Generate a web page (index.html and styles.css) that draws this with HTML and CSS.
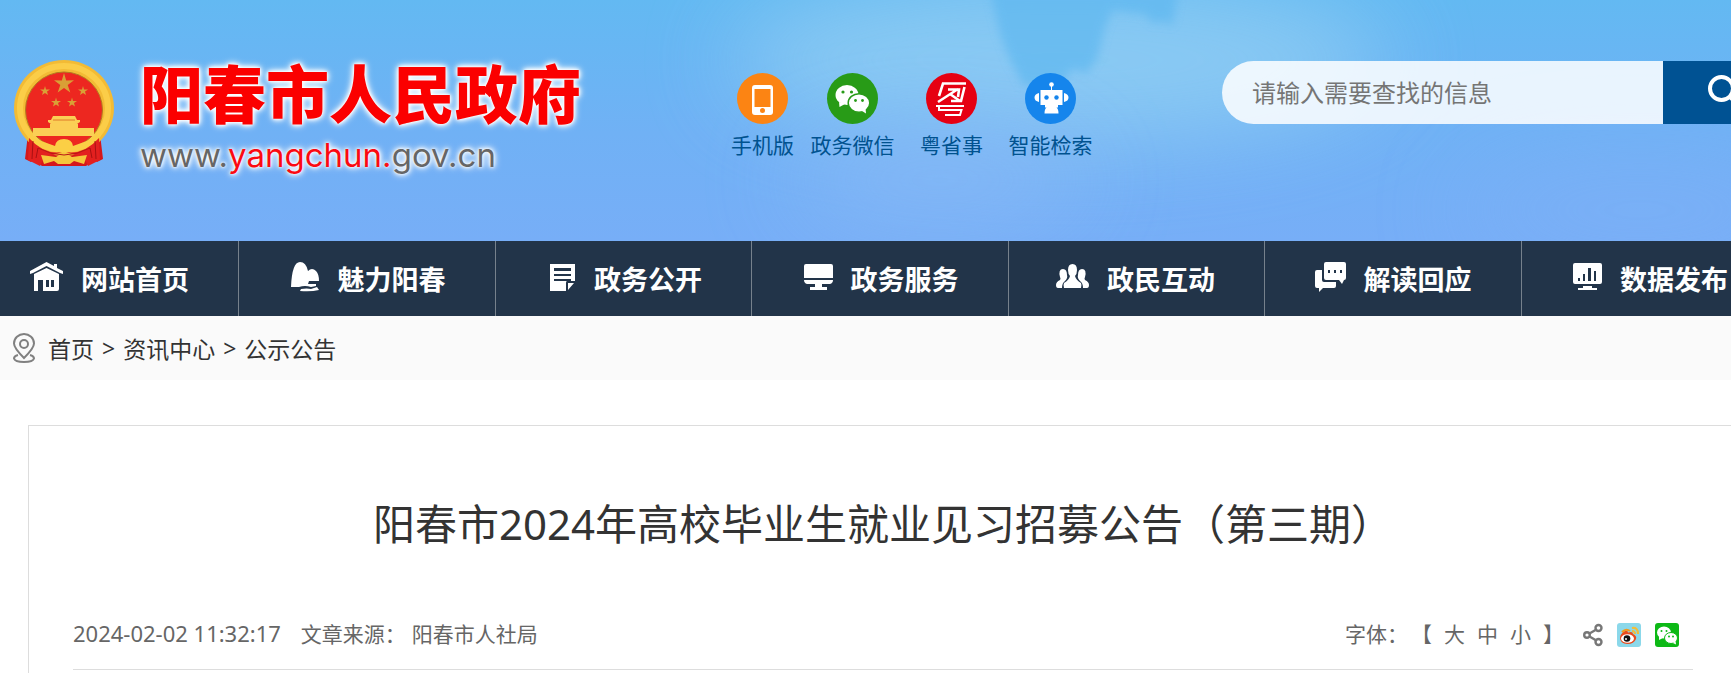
FILE: index.html
```html
<!DOCTYPE html>
<html lang="zh-CN">
<head>
    <meta charset="UTF-8">
    <meta name="viewport" content="width=device-width, initial-scale=1.0">
    <title>阳春市2024年高校毕业生就业见习招募公告（第三期）</title>
    <link rel="stylesheet" href="styles.css">
</head>
<body>
<div class="page">
    <header class="header">
        <svg class="sky" viewBox="0 0 1778 241" preserveAspectRatio="none" aria-hidden="true">
            <defs>
                <filter id="soft" x="-50%" y="-50%" width="200%" height="200%"><feGaussianBlur stdDeviation="5"/></filter>
                <filter id="haze" x="-50%" y="-100%" width="200%" height="300%"><feGaussianBlur stdDeviation="45"/></filter>
            </defs>
            <ellipse cx="1060" cy="60" rx="330" ry="80" fill="#93cff3" opacity=".8" filter="url(#haze)"/>
            <ellipse cx="940" cy="180" rx="150" ry="50" fill="#86b8f6" opacity=".8" filter="url(#haze)"/>
            <ellipse cx="1640" cy="210" rx="180" ry="50" fill="#7eb0f6" opacity=".6" filter="url(#haze)"/>
            <path d="M990-10H1178L1174 16L1171 26L1162 20L1154 24L1145 14L1112 10L1104 30L1098 56L1086 74L1074 68L1060 84L1024 86L1010 60L1000 34Z" fill="#5fb8f0" opacity=".7" filter="url(#soft)"/>
        </svg>
        <a class="logo" href="#">
            <svg class="emblem" viewBox="0 0 100 107" aria-label="国徽">
                <path d="M14 74L11 99L17 102L20 100L28 106H72L80 100L83 102L89 99L86 74Z" fill="#d5171b"/>
                <ellipse cx="50" cy="48" rx="50" ry="48" fill="#f3bb35"/>
                <ellipse cx="50" cy="48" rx="44" ry="42" fill="none" stroke="#fbcd48" stroke-width="6"/>
                <ellipse cx="50" cy="50" rx="38.500" ry="38" fill="#ed2720" stroke="#b27a20"/>
                <g fill="#d9a036">
                    <path d="M50 13L52.200 20.500L60 20.300L53.700 25L56.300 32.500L50 28L43.700 32.500L46.300 25L40 20.300L47.800 20.500Z"/>
                    <path d="M31 26L32 29.500L36 29.500L33 31.500L34 35L31 33L28 35L29 31.500L26 29.500L30 29.500Z"/>
                    <path d="M69 26L70 29.500L74 29.500L71 31.500L72 35L69 33L66 35L67 31.500L64 29.500L68 29.500Z"/>
                    <path d="M42 37.500L43 41L47 41L44 43L45 46.500L42 44.500L39 46.500L40 43L37 41L41 41Z"/>
                    <path d="M58 37.500L59 41L63 41L60 43L61 46.500L58 44.500L55 46.500L56 43L53 41L57 41Z"/>
                </g>
                <path d="M39 56H61L63 60H66V62L63 64H37L34 62V60H37ZM36 64H64V68H80V76H19V68H36Z" fill="#fbcf55"/>
                <path d="M39 60H61" stroke="#e07a2a"/>
                <path d="M13 76Q30 82 41 86Q42 79 50 79Q58 79 59 86Q70 82 87 76L78 86Q64 92 50 92Q36 92 22 86Z" fill="#fbcf45"/>
                <path d="M15 78Q30 95 48 92L30 98L26 106L14 100Z" fill="#e3201f"/>
                <path d="M85 78Q70 95 52 92L70 98L74 106L86 100Z" fill="#e3201f"/>
                <path d="M27 95L42 97L50 92L58 97L73 95L70 104L60 101L56 104H44L40 101L30 104Z" fill="#f6c63c"/>
                <path d="M24 88Q50 102 76 88" fill="none" stroke="#b81716" stroke-width="1"/>
                <path d="M19 81L18 99M24 88L22 98M81 81L82 99M76 88L78 98" stroke="#a81112" fill="none"/>
            </svg>
            <span class="logo-words">
                <strong class="logo-name">阳春市人民政府</strong>
                <span class="logo-url">www.<em>yangchun.</em>gov.cn</span>
            </span>
        </a>
        <nav class="quick">
            <a href="#">
                <svg viewBox="0 0 51 51"><circle cx="25.500" cy="25.500" r="25.500" fill="#fc8413"/><path fill="#fff" fill-rule="evenodd" d="M18 12H33Q36 12 36 15V39Q36 42 33 42H18Q15 42 15 39V15Q15 12 18 12ZM17.500 16V34H33.500V16ZM25.500 35A2.500 2.500 0 1 0 25.500 40A2.500 2.500 0 1 0 25.500 35Z"/></svg>
                手机版
            </a>
            <a href="#">
                <svg viewBox="0 0 51 51"><circle cx="25.500" cy="25.500" r="25.500" fill="#289b17"/><ellipse cx="20" cy="22" rx="11.500" ry="10" fill="#fff"/><path d="M12 29L12.500 34L18 31Z" fill="#fff"/><ellipse cx="32" cy="30" rx="10.800" ry="9.300" fill="#fff" stroke="#289b17" stroke-width="1.500"/><path d="M35 38L39 40.500L38.500 35Z" fill="#fff"/><g fill="#289b17"><circle cx="16" cy="19" r="1.600"/><circle cx="24.500" cy="19" r="1.600"/><circle cx="28.500" cy="27.500" r="1.400"/><circle cx="35.500" cy="27.500" r="1.400"/></g></svg>
                政务微信
            </a>
            <a href="#">
                <svg viewBox="0 0 51 51"><circle cx="25.500" cy="25.500" r="25.500" fill="#e60012"/><g fill="none" stroke="#fff" stroke-width="2.600"><path d="M13 23L17 10.500H40M38.500 14L35 28H25"/><path d="M12 29L32 16M22 16.500H33L32 24M24 21L34 28"/><path stroke-width="2" d="M10 33H38M13 33.500V37H35.500L34 42H19"/></g></svg>
                粤省事
            </a>
            <a href="#">
                <svg viewBox="0 0 51 51"><circle cx="25.500" cy="25.500" r="25.500" fill="#1585ec"/><g fill="#fff"><circle cx="26.500" cy="11.500" r="2.300"/><path d="M26 13H27V17H26ZM15.500 17H37.500V32H33V34.500H31.500Q33.500 36 33.500 40.500H19.500Q19.500 36 21.500 34.500H20V32H15.500ZM14 20V29Q9.500 28 9.500 24.500Q9.500 21 14 20ZM39 20V29Q43.500 28 43.500 24.500Q43.500 21 39 20Z"/></g><circle cx="21.500" cy="24.500" r="2.200" fill="#1585ec"/><circle cx="31.500" cy="24.500" r="2.200" fill="#1585ec"/></svg>
                智能检索
            </a>
        </nav>
        <form class="search">
            <input type="text" aria-label="站内搜索" placeholder="请输入需要查找的信息">
            <button type="submit" aria-label="搜索">
                <svg viewBox="0 0 32 32"><circle cx="13.500" cy="13.500" r="11.500"/><path d="M22 22L30 30"/></svg>
            </button>
        </form>
    </header>

    <nav class="menu">
        <a href="#">
            <svg width="33" height="30" viewBox="0 0 33 30"><path fill-rule="evenodd" d="M0 9L16.500 0L24 4V2H27V6L33 9V12L30 11L16.500 4L3 11L0 12ZM4 12L16.500 6L29 12V27Q29 29 27 29H4ZM8 18V29H13V18ZM16 18V25H19V18ZM21 18V25H24V18Z"/></svg>
            网站首页
        </a>
        <a href="#">
            <svg width="29" height="30" viewBox="0 0 29 30"><path d="M0 25Q1 0 9 0Q15 0 17 9Q21 5 25 9Q28 12 28 19H18L17 22H25V24L20 25Q14 23 8 25ZM10 27Q16 26 20 27L26 25L28 28Q20 30 9 29Z"/></svg>
            魅力阳春
        </a>
        <a href="#">
            <svg width="26" height="28" viewBox="0 0 26 28"><path fill-rule="evenodd" d="M0 1H25V18H17Q16 18 16 20V28H0ZM4 5V8H21V5ZM4 11V13H21V11ZM4 16V18H21V16ZM18 20H24L18 27Z"/></svg>
            政务公开
        </a>
        <a href="#">
            <svg width="29" height="28" viewBox="0 0 29 28"><path d="M2 1H27Q29 1 29 3V15H0V3Q0 1 2 1ZM0 17H29Q29 20 26 21H18V24H23V27H6V24H11V21H3Q0 20 0 17Z"/></svg>
            政务服务
        </a>
        <a href="#">
            <svg width="33" height="26" viewBox="0 0 33 26"><path d="M16.500 0Q21 0 21 6Q21 10 19 12Q20 16 25 19Q26 21 25 24H8Q7 21 8 19Q13 16 14 12Q12 10 12 6Q12 0 16.500 0ZM7 5Q11 5 11 11Q12 14 9 17Q6 19 6 24H2Q0 24 0 21Q0 18 4 16Q5 15 4 13Q2 5 7 5ZM26 5Q22 5 22 11Q21 14 24 17Q27 19 27 24H31Q33 24 33 21Q33 18 29 16Q28 15 29 13Q31 5 26 5Z"/></svg>
            政民互动
        </a>
        <a href="#">
            <svg width="31" height="30" viewBox="0 0 31 30"><path fill-rule="evenodd" d="M11 0H29Q31 0 31 2V16Q31 18 29 18L27 22L24 18H11Q9 18 9 16V2Q9 0 11 0ZM13 8V11H15V8ZM19 8V11H21V8ZM25 8V11H27V8Z"/><path d="M2 8H7V18Q7 20 9 20H21V24Q21 26 19 26H8L4 30V26H2Q0 26 0 24V10Q0 8 2 8Z"/></svg>
            解读回应
        </a>
        <a href="#">
            <svg width="29" height="28" viewBox="0 0 29 28"><path fill-rule="evenodd" d="M2 0H27Q29 0 29 2V19Q29 21 27 21H2Q0 21 0 19V2Q0 0 2 0ZM5 15V18H7V15ZM10 11V18H12V11ZM15 5V18H18V5ZM21 8V18H23V8Z"/><path d="M10 23H19V25H24V27H5V25H10Z"/></svg>
            数据发布
        </a>
    </nav>

    <div class="crumbs">
        <svg viewBox="0 0 22 30"><path d="M11 25Q1 15 1 10.500A10 9.500 0 0 1 21 10.500Q21 15 11 25Z"/><circle cx="11" cy="11" r="4"/><path d="M5 22Q1 23 1 25.500Q2 29 11 29Q20 29 21 25.500Q21 23 17 22"/></svg>
        <a href="#">首页</a>
        <span>&gt;</span>
        <a href="#">资讯中心</a>
        <span>&gt;</span>
        <a href="#">公示公告</a>
    </div>

    <main class="article">
        <h1>阳春市2024年高校毕业生就业见习招募公告（第三期）</h1>
        <div class="meta">
            <time>2024-02-02 11:32:17</time>
            <span class="source"><span>文章来源：</span><span>阳春市人社局</span></span>
            <div class="font-size">
                <span>字体：</span>
                <div class="sizes">
                    <span>【</span>
                    <button type="button">大</button>
                    <button type="button">中</button>
                    <button type="button">小</button>
                    <span>】</span>
                </div>
            </div>
            <div class="share">
                <a href="#" aria-label="分享"><svg width="20" height="24" viewBox="0 0 20 24"><g fill="none" stroke="#777" stroke-width="2.400"><circle cx="4" cy="12" r="2.800"/><circle cx="15.500" cy="5" r="3"/><circle cx="15.500" cy="19" r="3"/><path d="M6.500 10.500L12.500 7M6.500 13.500L12.500 17"/></g></svg></a>
                <a href="#" aria-label="微博"><svg width="24" height="24" viewBox="0 0 24 24"><rect width="24" height="24" rx="3" fill="#8bd8ea"/><path d="M3 15Q3 11 8 8Q11 7 11 9.500Q16 8 16 11Q20 13 19 16Q17 21 10.500 21Q3 20.500 3 15Z" fill="#ea4a1c"/><path d="M5 9Q9 5 13 8" stroke="#f39a1b" stroke-width="2" fill="none"/><ellipse cx="10.500" cy="15.500" rx="6.500" ry="4.300" fill="#fff"/><circle cx="10" cy="15.500" r="3.300" fill="#111"/><circle cx="9" cy="16" r="1" fill="#fff"/><path d="M15 5Q21 4 21 11M15 8Q18 8 18 11" stroke="#f3bd3a" stroke-width="2" fill="none"/></svg></a>
                <a href="#" aria-label="微信"><svg width="24" height="24" viewBox="0 0 24 24"><rect width="24" height="24" rx="3" fill="#0db916"/><ellipse cx="9" cy="9.500" rx="7" ry="6" fill="#fff"/><path d="M4 13L4 17L8 15Z" fill="#fff"/><ellipse cx="16" cy="15" rx="6.500" ry="5.500" fill="#fff" stroke="#0db916"/><path d="M18 20L21 21.500L20.500 18Z" fill="#fff"/><g fill="#0db916"><circle cx="6.500" cy="8" r="1"/><circle cx="11.500" cy="8" r="1"/><circle cx="14" cy="13.500" r="1"/><circle cx="18" cy="13.500" r="1"/></g></svg></a>
            </div>
        </div>
    </main>
</div>
</body>
</html>
```
FILE: styles.css
```css
* {
    box-sizing: border-box;
}
body {
    margin: 0;
    overflow-x: hidden;
    background: #fff;
    color: #333;
    font-family: "Noto Sans", "Noto Sans CJK SC", sans-serif;
    font-size: 21px;
}
a {
    color: inherit;
    text-decoration: none;
}
.page {
    min-width: 1778px;
}

/* header */
.header {
    position: relative;
    display: flex;
    align-items: flex-start;
    padding: 60px 0 69px 14px;
    overflow: hidden;
    background: linear-gradient(#63b9f2, #70b1f5 55%, #77aef7);
}
.header > * {
    position: relative;
}
.header .sky {
    position: absolute;
    inset: 0;
    width: 100%;
    height: 100%;
}
.logo {
    display: flex;
    gap: 26px;
    width: 708px;
}
.emblem {
    width: 100px;
    height: 107px;
}
.logo-words {
    display: flex;
    flex-direction: column;
    gap: 16px;
    text-shadow: 0 0 2px #fff, 0 0 4px #fff, 0 0 6px #fff, 0 0 8px #fff;
}
.logo-name {
    color: #fb0000;
    font-family: "Noto Sans CJK SC", sans-serif;
    font-size: 63px;
    font-weight: 900;
    line-height: 62px;
}
.logo-url {
    color: #666;
    font-family: Inter, sans-serif;
    font-size: 33px;
    line-height: 34px;
}
.logo-url em {
    color: #fb0a12;
    font-style: normal;
}
.quick {
    display: grid;
    grid-template-columns: 81px repeat(3, 99px);
    padding-top: 13px;
    color: #00528f;
}
.quick a {
    display: flex;
    flex-direction: column;
    align-items: center;
    gap: 6px;
    line-height: 30px;
    white-space: nowrap;
}
.quick svg {
    width: 51px;
    height: 51px;
}
.search {
    display: flex;
    flex: 1;
    height: 63px;
    margin: 1px 0 0 122px;
}
.search input {
    flex: 1;
    min-width: 0;
    padding: 0 30px;
    border: 0;
    border-radius: 32px 0 0 32px;
    background: rgba(255, 255, 255, 0.85);
    font-family: inherit;
    font-size: 24px;
}
.search input::placeholder {
    color: #757575;
}
.search button {
    width: 115px;
    padding: 0 0 0 45px;
    border: 0;
    background: #005293;
    text-align: left;
    cursor: pointer;
}
.search svg {
    width: 32px;
    height: 32px;
    fill: none;
    stroke: #fff;
    stroke-width: 4;
}

/* main menu */
.menu {
    display: grid;
    grid-template-columns: 239px repeat(6, 1fr);
    background: #223449;
    color: #fff;
    font-size: 27px;
    font-weight: bold;
}
.menu a {
    display: flex;
    align-items: center;
    justify-content: flex-end;
    gap: 18px;
    height: 75px;
    padding-right: 49px;
    border-right: 1px solid #76818c;
}
.menu svg {
    margin-bottom: 3px;
    fill: #fff;
}

/* breadcrumb */
.crumbs {
    display: flex;
    align-items: center;
    gap: 8px;
    height: 64px;
    padding-left: 13px;
    background: #fafafa;
    font-size: 23px;
}
.crumbs svg {
    width: 22px;
    height: 30px;
    margin-right: 5px;
    fill: none;
    stroke: #808080;
    stroke-width: 2;
}

/* article */
.article {
    margin: 45px 40px 0 28px;
    padding: 58px 44px 3px;
    border: 1px solid #ddd;
    border-bottom: 0;
}
.article h1 {
    margin: 0 0 36px;
    font-size: 42px;
    font-weight: normal;
    line-height: 80px;
    text-align: center;
}
.meta {
    display: flex;
    align-items: center;
    height: 70px;
    padding: 0 14px 4px 0;
    border-bottom: 1px solid #ddd;
    color: #666;
}
.meta time {
    font-size: 22px;
}
.source {
    display: flex;
    gap: 6px;
    margin-left: 20px;
}
.font-size {
    display: flex;
    gap: 3px;
    margin-left: auto;
}
.sizes {
    display: flex;
    gap: 12px;
}
.sizes button {
    padding: 0;
    border: 0;
    background: none;
    color: inherit;
    font: inherit;
    cursor: pointer;
}
.share {
    display: flex;
    gap: 14px;
    margin: 4px 0 0 19px;
}
.share svg {
    display: block;
}
```
